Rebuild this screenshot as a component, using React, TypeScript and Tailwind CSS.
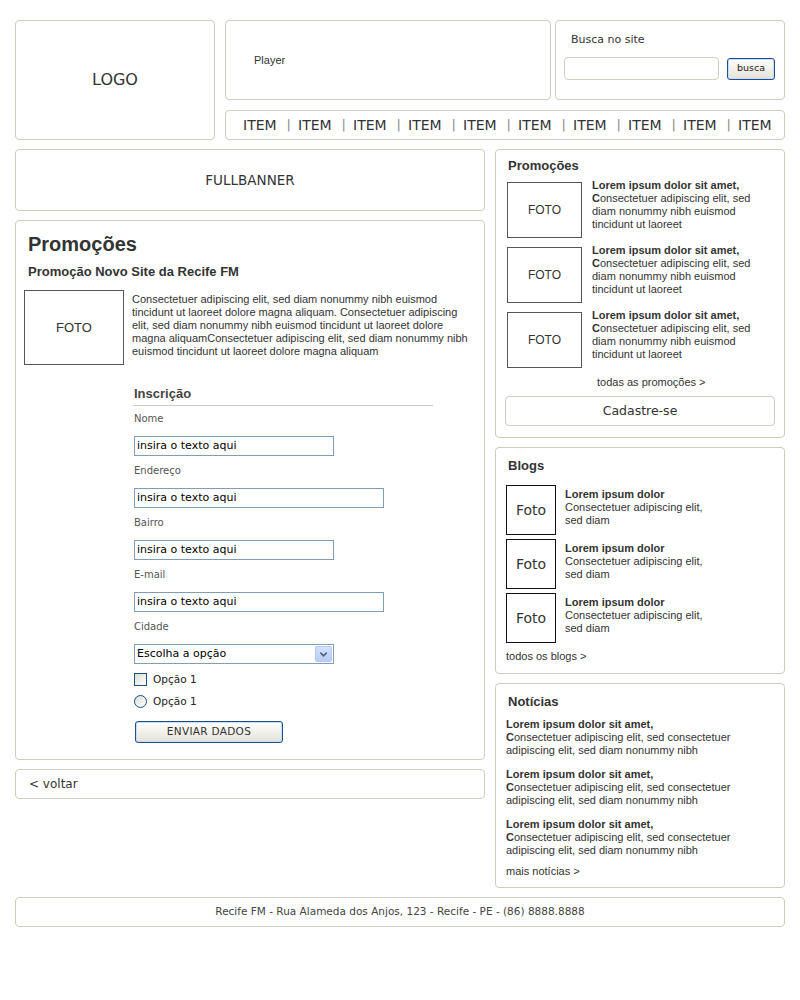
import { ChevronDown } from 'lucide-react'

const box = 'border border-[#cfcebd] rounded-[4px] bg-white'
const arial = 'font-["Liberation_Sans",Arial,sans-serif]'
const verdana = 'font-["DejaVu_Sans",Verdana,sans-serif]'

const lorem = 'Consectetuer adipiscing elit, sed diam nonummy nibh euismod tincidunt ut laoreet'

function Field({ label, wide, first }: { label: string; wide?: boolean; first?: boolean }) {
  return (
    <>
      <div className={`${first ? 'mt-[7px]' : 'mt-[9px]'} ${verdana} text-[10px] leading-[12px] text-[#555]`}>{label}</div>
      <div className={`mt-[11px] h-[20px] ${wide ? 'w-[250px]' : 'w-[200px]'} border border-[#7f9db9] bg-white pl-[2px] ${verdana} text-[11px] leading-[18px] text-black`}>
        insira o texto aqui
      </div>
    </>
  )
}

export default function App() {
  return (
    <main className={`w-[800px] bg-white pt-[20px] pl-[15px] pb-[70px] text-[#333] ${arial}`}>
      <div className="w-[770px]">
        {/* header */}
        <div className="flex gap-[10px]">
          <div className={`${box} w-[200px] h-[120px] flex items-center justify-center ${verdana} text-[16px] text-[#333]`}>
            LOGO
          </div>
          <div className="w-[560px] flex flex-col gap-[10px]">
            <div className="flex gap-[4px]">
              <div className={`${box} w-[326px] h-[80px] flex items-center pl-[28px] text-[11px]`}>Player</div>
              <div className={`${box} w-[230px] h-[80px] pt-[12px]`}>
                <div className={`pl-[15px] ${verdana} text-[11px] leading-[14px] text-[#333]`}>Busca no site</div>
                <div className="mt-[10px] pl-[8px] flex items-center gap-[8px]">
                  <div className="w-[155px] h-[23px] rounded-[4px] border border-[#cfcebd] bg-white" />
                  <button className={`w-[48px] h-[22px] rounded-[3px] border border-[#1d4f8f] bg-gradient-to-b from-white to-[#e4e2d6] ${verdana} text-[9.5px] text-[#222] shadow-[inset_0_0_0_1px_#c9dbf5]`}>
                    busca
                  </button>
                </div>
              </div>
            </div>
            <div className={`${box} h-[30px] flex items-center pl-[17px] ${verdana} text-[14px] text-[#333]`}>
              {Array.from({ length: 10 }).map((_, i) => (
                <span key={i} className="flex items-center">
                  {i > 0 && <span className="ml-[10px] mr-[7px] text-[#888] text-[13px]">|</span>}
                  <span>ITEM</span>
                </span>
              ))}
            </div>
          </div>
        </div>

        {/* body */}
        <div className="mt-[9px] flex gap-[10px] items-start">
          {/* left column */}
          <div className="w-[470px] flex flex-col gap-[9px]">
            <div className={`${box} h-[62px] flex items-center justify-center ${verdana} text-[13.5px] text-[#333]`}>
              FULLBANNER
            </div>

            <div className={`${box} h-[540px] flex flex-col`}>
              <h2 className="mt-[11px] ml-[12px] text-[20px] leading-[24px] font-bold text-[#333]">Promoções</h2>
              <h3 className="mt-[8px] ml-[12px] text-[13px] leading-[16px] font-bold text-[#333]">
                Promoção Novo Site da Recife FM
              </h3>
              <div className="mt-[10px] ml-[8px] flex items-start gap-[8px]">
                <div className="w-[100px] h-[75px] shrink-0 border border-[#555] flex items-center justify-center text-[13px] text-[#333]">
                  FOTO
                </div>
                <p className="mt-[3px] pr-[10px] text-[11px] leading-[13px] text-[#333]">
                  Consectetuer adipiscing elit, sed diam nonummy nibh euismod tincidunt ut laoreet dolore magna aliquam.
                  Consectetuer adipiscing elit, sed diam nonummy nibh euismod tincidunt ut laoreet dolore magna
                  aliquamConsectetuer adipiscing elit, sed diam nonummy nibh euismod tincidunt ut laoreet dolore magna
                  aliquam
                </p>
              </div>

              <form className="mt-[21px] ml-[117px] w-[300px] flex flex-col">
                <div className="pb-[3px] border-b border-[#cccccc] pl-[1px] text-[13px] leading-[16px] font-bold text-[#444]">
                  Inscrição
                </div>
                <div className="pl-[1px] flex flex-col">
                  <Field label="Nome" first />
                  <Field label="Endereço" wide />
                  <Field label="Bairro" />
                  <Field label="E-mail" wide />
                  <div className={`mt-[9px] ${verdana} text-[10px] leading-[12px] text-[#555]`}>Cidade</div>
                  <div className={`mt-[11px] h-[20px] w-[200px] border border-[#7f9db9] bg-white flex items-center justify-between pl-[2px] pr-[1px] ${verdana} text-[11px] text-black`}>
                    <span>Escolha a opção</span>
                    <span className="w-[17px] h-[16px] rounded-[2px] bg-gradient-to-b from-[#d5e2fc] to-[#b9cdf7] border border-[#b7c8f0] flex items-center justify-center">
                      <ChevronDown size={11} strokeWidth={3.5} className="text-[#4d6185]" />
                    </span>
                  </div>
                  <div className={`mt-[9px] flex items-center gap-[6px] ${verdana} text-[10.5px] leading-[13px] text-[#222]`}>
                    <span className="w-[13px] h-[13px] border border-[#1c5180] bg-gradient-to-br from-[#dcdcd6] to-white" />
                    Opção 1
                  </div>
                  <div className={`mt-[9px] flex items-center gap-[6px] ${verdana} text-[10.5px] leading-[13px] text-[#222]`}>
                    <span className="w-[13px] h-[13px] rounded-full border border-[#1c5180] bg-gradient-to-br from-[#dcdcd6] to-white" />
                    Opção 1
                  </div>
                  <button
                    type="button"
                    className={`mt-[13px] ml-[1px] w-[148px] h-[22px] rounded-[3px] border border-[#1d4f8f] bg-gradient-to-b from-white to-[#e4e2d6] shadow-[inset_0_0_0_1px_#c9dbf5] ${verdana} text-[10.5px] tracking-[0.3px] text-[#333]`}
                  >
                    ENVIAR DADOS
                  </button>
                </div>
              </form>
            </div>

            <div className={`${box} h-[30px] flex items-center pl-[13px] ${verdana} text-[12px] text-[#333]`}>
              &lt; voltar
            </div>
          </div>

          {/* right column */}
          <aside className="w-[290px] flex flex-col gap-[9px]">
            <section className={`${box} pt-[8px] px-[9px] pb-[11px]`}>
              <h4 className="pl-[3px] text-[13px] leading-[16px] font-bold text-[#333]">Promoções</h4>
              <div className="mt-[8px] pl-[2px] flex flex-col gap-[9px]">
                {[0, 1, 2].map((i) => (
                  <div key={i} className="flex items-start gap-[10px]">
                    <div className="w-[75px] h-[56px] shrink-0 border border-[#555] flex items-center justify-center text-[12px] text-[#333]">
                      FOTO
                    </div>
                    <p className="-mt-[3px] w-[182px] text-[11px] leading-[13px] text-[#333]">
                      <b>Lorem ipsum dolor sit amet,</b>
                      <br />
                      <b>C</b>
                      {lorem.slice(1)}
                    </p>
                  </div>
                ))}
              </div>
              <div className="mt-[8px] pl-[92px] text-[11px] leading-[13px] text-[#333]">todas as promoções &gt;</div>
              <div className={`mt-[7px] h-[30px] rounded-[4px] border border-[#cfcebd] flex items-center justify-center ${verdana} text-[12.5px] text-[#333]`}>
                Cadastre-se
              </div>
            </section>

            <section className={`${box} pt-[10px] px-[10px] pb-[10px]`}>
              <h4 className="pl-[2px] text-[13px] leading-[16px] font-bold text-[#333]">Blogs</h4>
              <div className="mt-[11px] flex flex-col gap-[4px]">
                {[0, 1, 2].map((i) => (
                  <div key={i} className="flex items-start gap-[9px]">
                    <div className={`w-[50px] h-[50px] shrink-0 border border-[#111] flex items-center justify-center ${verdana} text-[14px] text-[#333]`}>
                      Foto
                    </div>
                    <p className="mt-[3px] w-[150px] text-[11px] leading-[13px] text-[#333]">
                      <b>Lorem ipsum dolor</b>
                      <br />
                      Consectetuer adipiscing elit, sed diam
                    </p>
                  </div>
                ))}
              </div>
              <div className="mt-[7px] text-[11px] leading-[13px] text-[#333]">todos os blogs &gt;</div>
            </section>

            <section className={`${box} pt-[10px] px-[10px] pb-[9px]`}>
              <h4 className="pl-[2px] text-[13px] leading-[16px] font-bold text-[#333]">Notícias</h4>
              <div className="mt-[8px] flex flex-col gap-[11px]">
                {[0, 1, 2].map((i) => (
                  <p key={i} className="text-[11px] leading-[13px] text-[#333]">
                    <b>Lorem ipsum dolor sit amet,</b>
                    <br />
                    <b>C</b>onsectetuer adipiscing elit, sed consectetuer adipiscing elit, sed diam nonummy nibh
                  </p>
                ))}
              </div>
              <div className="mt-[8px] text-[11px] leading-[13px] text-[#333]">mais notícias &gt;</div>
            </section>
          </aside>
        </div>

        {/* footer */}
        <footer className={`${box} mt-[9px] h-[30px] flex items-center justify-center ${verdana} text-[10.5px] text-[#444]`}>
          Recife FM - Rua Alameda dos Anjos, 123 - Recife - PE - (86) 8888.8888
        </footer>
      </div>
    </main>
  )
}
